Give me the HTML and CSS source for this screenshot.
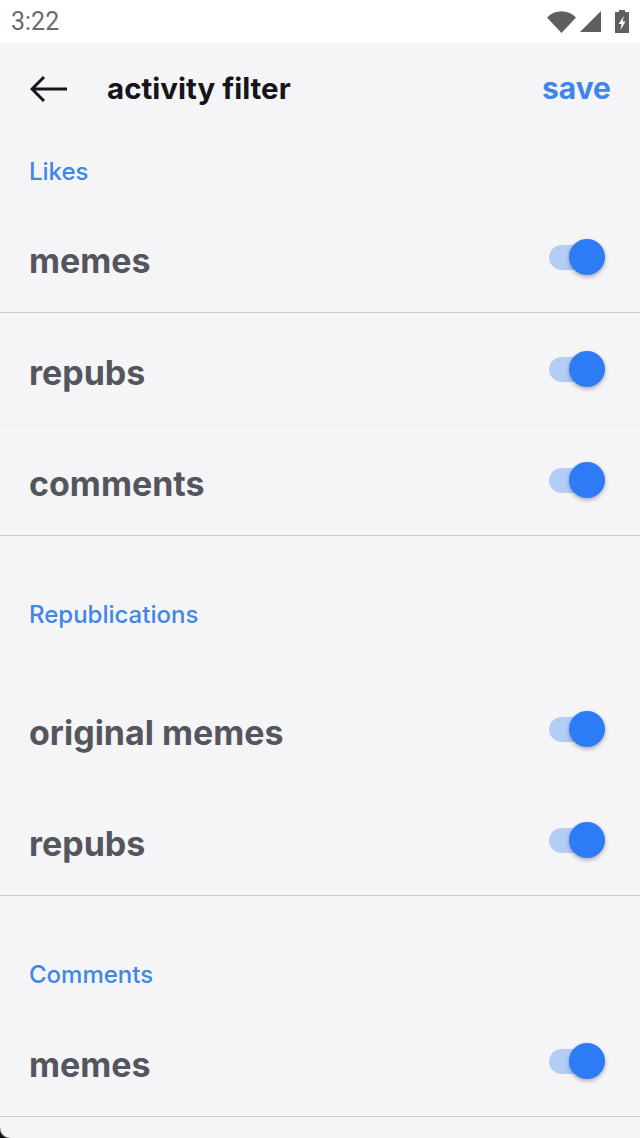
FILE: index.html
```html
<!DOCTYPE html>
<html lang="en">
<head>
    <meta charset="UTF-8">
    <meta name="viewport" content="width=device-width, initial-scale=1.0">
    <title>activity filter</title>
    <link rel="stylesheet" href="styles.css">
</head>
<body>
    <div class="statusbar">
        <span class="clock">3:22</span>
        <div class="status-icons">
            <svg class="icon-wifi" width="29" height="22" viewBox="0 0 29 22"><path d="M0 6.500 C8 -2 21 -2 29 6.500 L14.500 22 Z" fill="#5f5f5f"/></svg>
            <svg class="icon-signal" width="21" height="21" viewBox="0 0 21 21"><path d="M21 0 V21 H0 Z" fill="#5f5f5f"/></svg>
            <svg class="icon-battery" width="14" height="23" viewBox="0 0 14 23"><path d="M4 0 H10 V2 H14 V23 H0 V2 H4 Z" fill="#5f5f5f"/><path d="M9 6 L3.500 14 H6.500 L5.500 20 L10.500 11.500 H7.500 Z" fill="#fff"/></svg>
        </div>
    </div>

    <header class="topbar">
        <svg class="back" width="38" height="28" viewBox="0 0 38 28"><path d="M37 14 H3 M14 2 L2 14 L14 26" fill="none" stroke="#15151a" stroke-width="3"/></svg>
        <h1 class="title">activity filter</h1>
        <a class="save" href="#">save</a>
    </header>

    <section class="group group-likes">
        <h2 class="group-label">Likes</h2>
        <div class="row line"><span class="row-text">memes</span><span class="toggle"></span></div>
        <div class="row row-tall line-faint"><span class="row-text">repubs</span><span class="toggle"></span></div>
        <div class="row row-short line"><span class="row-text">comments</span><span class="toggle"></span></div>
    </section>

    <section class="group group-republications">
        <h2 class="group-label">Republications</h2>
        <div class="row"><span class="row-text">original memes</span><span class="toggle"></span></div>
        <div class="row line"><span class="row-text">repubs</span><span class="toggle"></span></div>
    </section>

    <section class="group group-comments">
        <h2 class="group-label">Comments</h2>
        <div class="row line"><span class="row-text">memes</span><span class="toggle"></span></div>
    </section>

    <div class="corner"></div>
</body>
</html>
```

FILE: styles.css
```css
html, body {
    height: 100%;
}

body {
    margin: 0;
    height: 1138px;
    overflow: hidden;
    position: relative;
    background-color: #f5f5f8;
    font-family: Inter, Roboto, "Liberation Sans", sans-serif;
}

.statusbar {
    height: 43px;
    background-color: #fff;
    display: flex;
    align-items: center;
    justify-content: space-between;
    padding: 0 11px;
    box-sizing: border-box;
    font-family: Roboto, sans-serif;
}

.clock {
    font-size: 25px;
    color: #6b6b6b;
}

.status-icons {
    display: flex;
    align-items: center;
}

.icon-signal {
    margin-left: 4px;
}

.icon-battery {
    margin-left: 14px;
}

.topbar {
    height: 92px;
    display: flex;
    align-items: center;
    padding: 0 29px 0 30px;
}

.back {
    margin-right: 39px;
}

.title {
    margin: 0 0 2px;
    flex: 1;
    font-size: 29.5px;
    font-weight: 700;
    color: #15151a;
}

.save {
    margin-bottom: 2px;
    font-size: 30px;
    font-weight: 700;
    color: #3e86ee;
    text-decoration: none;
}

.group-label {
    margin: 0;
    padding: 0 29px;
    font-size: 24px;
    font-weight: 500;
    line-height: 30px;
    color: #3f87e6;
}

.group-likes .group-label {
    padding-top: 22px;
    padding-bottom: 15px;
}

.group-republications .group-label {
    padding-top: 64px;
    padding-bottom: 44px;
}

.group-comments .group-label {
    padding-top: 64px;
    padding-bottom: 16px;
}

.row {
    height: 111px;
    box-sizing: border-box;
    display: flex;
    align-items: center;
    justify-content: space-between;
    padding: 0 35px 0 29px;
    font-size: 34px;
    font-weight: 700;
    color: #55555d;
}

.row-text {
    padding-top: 6px;
}

.row-tall {
    height: 113px;
}

.row-short {
    height: 110px;
}

.line {
    border-bottom: 1px solid #c9c9cd;
}

.line-faint {
    border-bottom: 1px solid #ececf0;
}

.toggle {
    position: relative;
    width: 56px;
    height: 25px;
    border-radius: 13px;
    background-color: #b4cdf7;
}

.toggle::after {
    content: "";
    position: absolute;
    right: 0;
    top: -6px;
    width: 36px;
    height: 36px;
    border-radius: 50%;
    background-color: #2e7bf6;
    box-shadow: 0 2px 4px rgba(0, 0, 0, 0.3);
}

.corner {
    position: absolute;
    left: 0;
    bottom: 0;
    width: 10px;
    height: 10px;
    background: radial-gradient(circle at top right, transparent 9px, #111 11px);
}
```
